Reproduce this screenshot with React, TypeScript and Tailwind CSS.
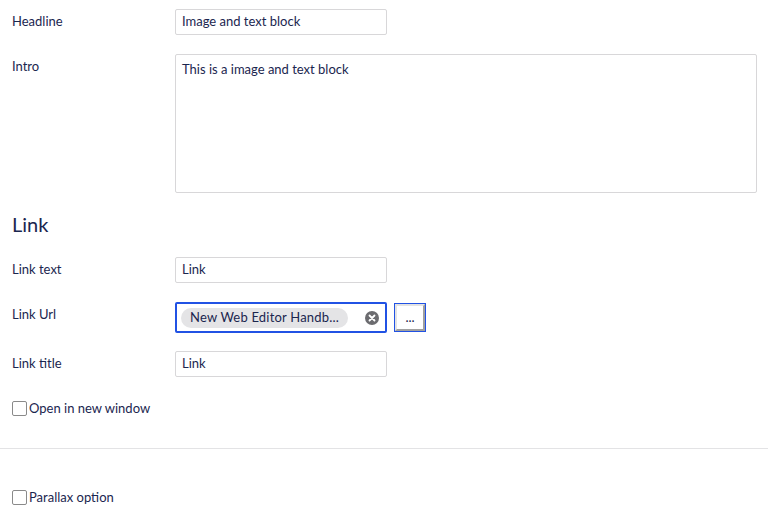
import React from "react";

function Row({ label, children, className = "" }: { label: string; children: React.ReactNode; className?: string }) {
  return (
    <div className={`flex items-start ${className}`}>
      <label className="w-[163px] shrink-0 pt-[3px] text-[13px] leading-[18px]">{label}</label>
      <div className="flex-1">{children}</div>
    </div>
  );
}

function TextInput({ value }: { value: string }) {
  return (
    <div className="flex h-[26px] w-[212px] items-center rounded-[2px] border border-[#d8d7d9] bg-white px-[6px] text-[13px]">
      {value}
    </div>
  );
}

function Checkbox({ label }: { label: string }) {
  return (
    <div className="flex items-center text-[13px] leading-[18px]">
      <span className="h-[15px] w-[15px] rounded-[2px] border border-[#8a8a8a] bg-white" />
      <span className="ml-[2px]">{label}</span>
    </div>
  );
}

export default function App() {
  return (
    <div className="min-h-[515px] bg-white pt-[9px] text-[#1b264f]" style={{ fontFamily: "Lato, 'Open Sans', sans-serif" }}>
      <div className="px-3">
        <Row label="Headline">
          <TextInput value="Image and text block" />
        </Row>

        <Row label="Intro" className="mt-[19px]">
          <div className="h-[139px] w-[582px] rounded-[2px] border border-[#d8d7d9] bg-white px-[6px] pt-[5px] text-[13px] leading-[18px]">
            This is a image and text block
          </div>
        </Row>

        <h3 className="mt-[18px] text-[20px] leading-[26px]">Link</h3>

        <Row label="Link text" className="mt-[20px]">
          <TextInput value="Link" />
        </Row>

        <Row label="Link Url" className="mt-[19px]">
          <div className="flex items-center gap-[7px]">
            <div className="flex h-[31px] w-[212px] items-center justify-between rounded-[2px] border-2 border-[#2152e4] bg-white pl-[4px] pr-[6px]">
              <span className="flex h-[20px] items-center rounded-full bg-[#e4e4e6] pl-[9px] pr-[9px] text-[13px] tracking-[0.2px]">
                New Web Editor Handb...
              </span>
              <svg width="14" height="14" viewBox="0 0 14 14">
                <circle cx="7" cy="7" r="7" fill="#6b6b6f" />
                <path d="M4.5 4.5 L9.5 9.5 M9.5 4.5 L4.5 9.5" stroke="#fff" strokeWidth="1.8" strokeLinecap="round" />
              </svg>
            </div>
            <button className="flex h-[29px] w-[32px] items-center justify-center border border-[#2152e4] bg-white p-0">
              <span className="flex h-full w-full items-center justify-center border-2 border-t-[#e3e3e3] border-l-[#e3e3e3] border-b-[#a0a0a0] border-r-[#a0a0a0] bg-white text-[13px] leading-none text-[#1b264f]">
                ...
              </span>
            </button>
          </div>
        </Row>

        <Row label="Link title" className="mt-[18px]">
          <TextInput value="Link" />
        </Row>

        <div className="mt-[22px]">
          <Checkbox label="Open in new window" />
        </div>
      </div>

      <div className="mt-[31px] h-px w-full bg-[#e3e3e5]" />

      <div className="mt-[39px] px-3">
        <Checkbox label="Parallax option" />
      </div>
    </div>
  );
}
